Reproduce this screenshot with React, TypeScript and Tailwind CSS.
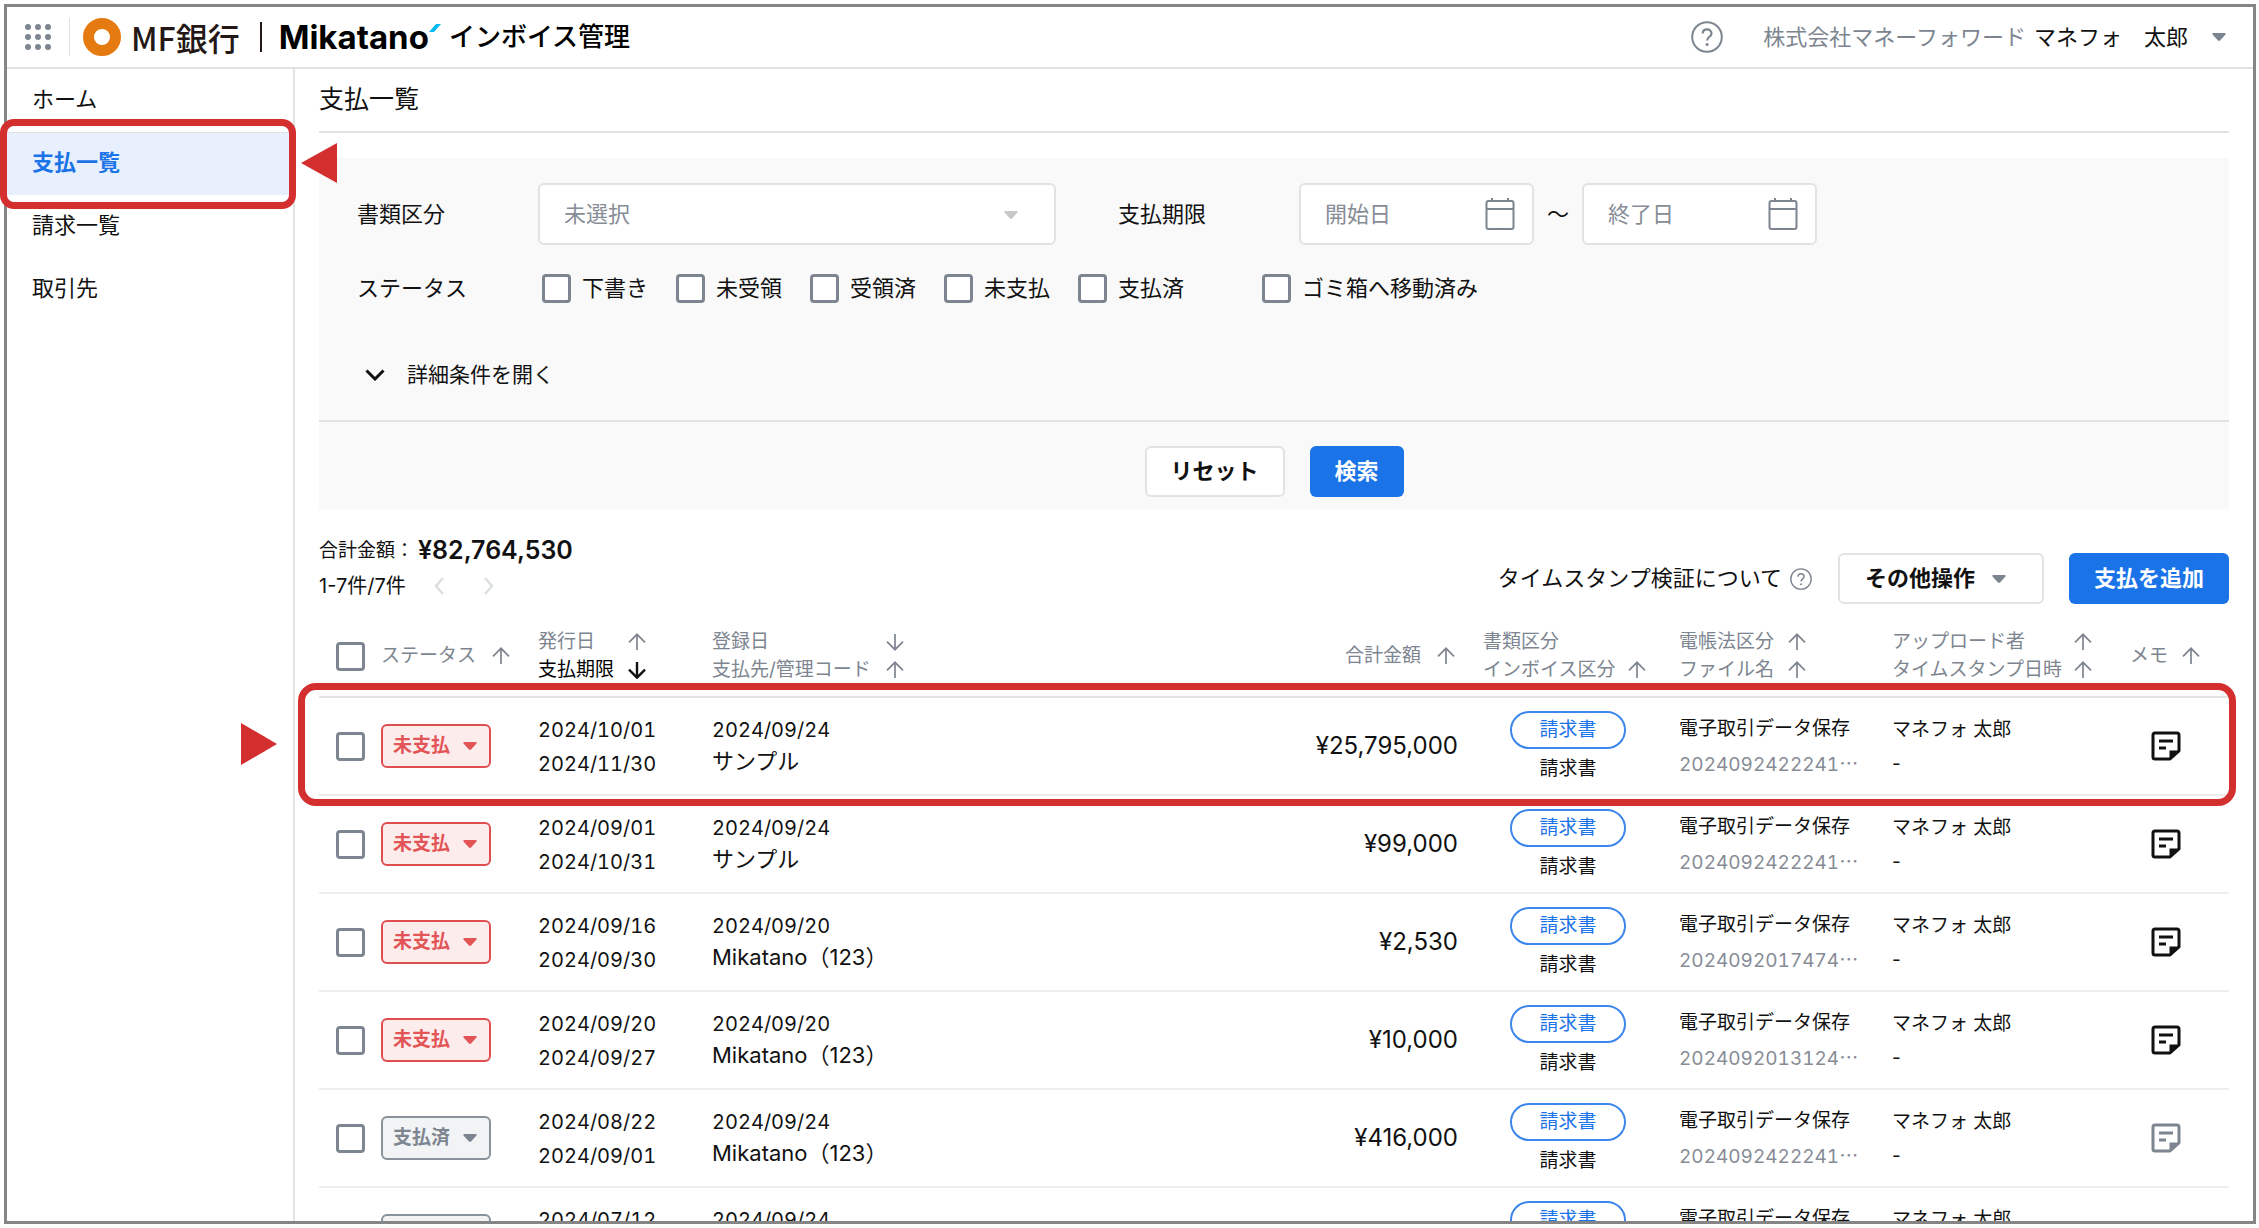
import type { ReactNode } from "react";

type Payment = {
  status: "未支払" | "支払済";
  issued: string;
  due: string;
  registered: string;
  payee: string;
  amount: string;
  file: string;
  memo: boolean;
};

const payments: Payment[] = [
  { status: "未支払", issued: "2024/10/01", due: "2024/11/30", registered: "2024/09/24", payee: "サンプル", amount: "¥25,795,000", file: "2024092422241", memo: true },
  { status: "未支払", issued: "2024/09/01", due: "2024/10/31", registered: "2024/09/24", payee: "サンプル", amount: "¥99,000", file: "2024092422241", memo: true },
  { status: "未支払", issued: "2024/09/16", due: "2024/09/30", registered: "2024/09/20", payee: "Mikatano（123）", amount: "¥2,530", file: "2024092017474", memo: true },
  { status: "未支払", issued: "2024/09/20", due: "2024/09/27", registered: "2024/09/20", payee: "Mikatano（123）", amount: "¥10,000", file: "2024092013124", memo: true },
  { status: "支払済", issued: "2024/08/22", due: "2024/09/01", registered: "2024/09/24", payee: "Mikatano（123）", amount: "¥416,000", file: "2024092422241", memo: false },
  { status: "支払済", issued: "2024/07/12", due: "2024/08/01", registered: "2024/09/24", payee: "サンプル", amount: "¥416,000", file: "2024092422241", memo: false },
];

const navItems = ["ホーム", "支払一覧", "請求一覧", "取引先"];
const statuses = ["下書き", "未受領", "受領済", "未支払", "支払済"];

function Caret({ className = "" }: { className?: string }) {
  return (
    <svg viewBox="0 0 14 8" className={`h-2 w-3.5 shrink-0 ${className}`} fill="currentColor" aria-hidden="true">
      <path d="M1.2 0h11.6c.8 0 1.2.8.7 1.4L8 7.5c-.5.6-1.5.6-2 0L.5 1.4C0 .8.4 0 1.2 0z" />
    </svg>
  );
}

function HelpIcon({ className }: { className: string }) {
  return (
    <svg viewBox="0 0 32 32" className={`shrink-0 text-[#7d8590] ${className}`} fill="none" stroke="currentColor" strokeWidth="2" aria-hidden="true">
      <circle cx="16" cy="16" r="14.8" />
      <path d="M11.7 12.6c0-2.6 1.9-4.2 4.4-4.2s4.4 1.6 4.4 4c0 3.300-4.400 3.500-4.400 7.200" strokeWidth="2.2" />
      <circle cx="16.1" cy="23.6" r="1.5" fill="currentColor" stroke="none" />
    </svg>
  );
}

function Arrow({ down = false, active = false }: { down?: boolean; active?: boolean }) {
  return (
    <svg viewBox="0 0 18 18" className={`h-[18px] w-[18px] shrink-0 ${active ? "text-[#111]" : "text-[#7d8590]"}`} fill="none" stroke="currentColor" strokeWidth={active ? 2.4 : 1.7} aria-hidden="true">
      <path d={down ? "M9 1v15.5M1 8.7l8 8 8-8" : "M9 17V1.5M1 9.3l8-8 8 8"} />
    </svg>
  );
}

function SortLabel({ label, down, active, sortable = true, className = "" }: { label: string; down?: boolean; active?: boolean; sortable?: boolean; className?: string }) {
  return (
    <button type="button" className={`flex h-7 items-center whitespace-nowrap ${active ? "text-black" : ""} ${className}`}>
      {label}
      {sortable && <Arrow down={down} active={active} />}
    </button>
  );
}

function Checkbox({ id, label }: { id?: string; label?: string }) {
  return (
    <input id={id} type="checkbox" aria-label={label} className="block h-[29px] w-[29px] shrink-0 appearance-none rounded-[4px] border-[3px] border-[#7d8590] bg-white" />
  );
}

function LabeledCheckbox({ label }: { label: string }) {
  return (
    <div className="flex items-center gap-[11px]">
      <Checkbox id={`status-${label}`} />
      <label htmlFor={`status-${label}`} className="whitespace-nowrap">{label}</label>
    </div>
  );
}

function DateField({ label }: { label: string }) {
  return (
    <div className="flex h-[62px] w-[235px] items-center rounded-md border-2 border-[#dfe3e3] bg-white pr-[17px] pl-6">
      <input type="text" aria-label={label} placeholder={label} className="w-full min-w-0 bg-transparent outline-none placeholder:text-[#878c96]" />
      <svg viewBox="0 0 30 32" className="h-8 w-[30px] shrink-0 text-[#7d8590]" fill="none" stroke="currentColor" strokeWidth="2" aria-hidden="true">
        <rect x="1.5" y="3" width="27" height="28" rx="2" />
        <path d="M1.5 11h27M7 0v4M23 0v4" />
      </svg>
    </div>
  );
}

function MemoIcon({ filled }: { filled: boolean }) {
  return (
    <svg viewBox="0 0 30 30" className={`h-[30px] w-[30px] ${filled ? "text-[#111]" : "text-[#7d8590]"}`} fill="none" stroke="currentColor" strokeWidth="3" aria-hidden="true">
      <path d="M19 28H4a2 2 0 0 1-2-2V4a2 2 0 0 1 2-2h22a2 2 0 0 1 2 2v16z" strokeLinejoin="round" />
      <path d="M18.5 29v-9.5H29z" fill="currentColor" stroke="none" />
      <path d="M8 10h14M8 17h7" strokeWidth="2.8" />
    </svg>
  );
}

function Header() {
  return (
    <header className="flex h-[62px] shrink-0 items-center border-b-2 border-[#dfe3e3] pr-[27px] pl-[17px]">
      <button type="button" aria-label="メニュー" className="grid grid-cols-3 gap-1 p-px">
        {Array.from({ length: 9 }, (_, i) => (
          <span key={i} className="h-1.5 w-1.5 rounded-full bg-[#7d8590]" />
        ))}
      </button>
      <span className="ml-[17px] h-[38px] w-px bg-[#dfe3e3]" />
      <span className="ml-[13px] h-[38px] w-[38px] rounded-full border-[11px] border-[#e57b10]" />
      <span className="ml-[10px] font-['Noto_Sans_CJK_JP',sans-serif] text-[32px] leading-none font-medium text-[#231815]">MF銀行</span>
      <span className="ml-5 h-[30px] w-0.5 bg-[#231815]" />
      <h1 className="ml-[17px] flex items-center text-[26px] leading-none font-medium text-black">
        <span className="text-[33px] leading-none font-bold">Mikatano</span>
        <svg viewBox="0 0 12 8" className="mb-[18px] h-2 w-3" aria-hidden="true">
          <path d="M7 0h5L5 8H0z" fill="#00b9f2" />
        </svg>
        <span className="ml-2">インボイス管理</span>
      </h1>
      <div className="ml-auto flex items-center">
        <button type="button" aria-label="ヘルプ">
          <HelpIcon className="h-8 w-8" />
        </button>
        <button type="button" className="ml-10 flex items-center gap-2">
          <span className="text-[#7d8590]">株式会社マネーフォワード</span>
          <span>マネフォ　太郎</span>
          <Caret className="ml-4 text-[#7d8590]" />
        </button>
      </div>
    </header>
  );
}

function Sidebar() {
  return (
    <nav className="w-[288px] shrink-0 border-r-2 border-[#dfe3e3]">
      {navItems.map((item) =>
        item === "支払一覧" ? (
          <div key={item} className="relative">
            <a href="#" className="flex h-[63px] items-center border-t border-[#dfe3e3] bg-[#e8f0fe] pb-[3px] pl-[25px] font-bold text-[#1b73e8]">{item}</a>
            <span className="pointer-events-none absolute -top-[13px] -right-[3px] -bottom-[14px] -left-[7px] rounded-[14px] border-[7px] border-[#d32f2f]" />
            <svg viewBox="0 0 36 40" className="absolute top-[11px] left-[294px] z-10 h-10 w-9" aria-hidden="true">
              <path d="M36 0v40L0 20z" fill="#d32f2f" />
            </svg>
          </div>
        ) : (
          <a key={item} href="#" className="flex h-[63px] items-center pb-[3px] pl-[25px]">{item}</a>
        ),
      )}
    </nav>
  );
}

function Filters() {
  return (
    <form className="mt-[25px] bg-[#f9f9f9]">
      <div className="pt-[25px] pr-6 pb-[30px] pl-[38px]">
        <div className="flex items-center">
          <label htmlFor="doc-type" className="w-[181px] shrink-0">書類区分</label>
          <div className="relative w-[518px]">
            <select id="doc-type" className="h-[62px] w-full appearance-none rounded-md border-2 border-[#dfe3e3] bg-white pl-6 text-[#878c96]">
              <option>未選択</option>
            </select>
            <Caret className="absolute top-[28px] right-[38px] text-[#c8c8c8]" />
          </div>
          <span className="ml-[62px] w-[181px] shrink-0">支払期限</span>
          <DateField label="開始日" />
          <span className="w-12 text-center">～</span>
          <DateField label="終了日" />
        </div>
        <div className="mt-[29px] flex h-[29px] items-center">
          <span className="w-[185px] shrink-0">ステータス</span>
          <div className="flex gap-7">
            {statuses.map((s) => (
              <LabeledCheckbox key={s} label={s} />
            ))}
          </div>
          <div className="ml-[78px]">
            <LabeledCheckbox label="ゴミ箱へ移動済み" />
          </div>
        </div>
        <button type="button" className="mt-[57px] ml-2 flex h-[30px] items-center gap-[22px] text-[21px]">
          <svg viewBox="0 0 20 12" className="h-3 w-5" fill="none" stroke="currentColor" strokeWidth="3" aria-hidden="true">
            <path d="M1.5 1.5l8.5 8.5 8.5-8.5" />
          </svg>
          詳細条件を開く
        </button>
      </div>
      <div className="flex justify-center gap-[25px] border-t-2 border-[#dfe3e3] pt-6 pb-3 font-bold">
        <button type="reset" className="h-[51px] w-[140px] rounded-md border-2 border-[#dfe3e3] bg-white">リセット</button>
        <button type="button" className="h-[51px] w-[94px] rounded-md bg-[#1b73e8] text-white">検索</button>
      </div>
    </form>
  );
}

function Pager({ label, d }: { label: string; d: string }) {
  return (
    <button type="button" aria-label={label}>
      <svg viewBox="0 0 10 18" className="h-[18px] w-[10px] text-[#dbdfdf]" fill="none" stroke="currentColor" strokeWidth="2.4" aria-hidden="true">
        <path d={d} />
      </svg>
    </button>
  );
}

function Toolbar() {
  return (
    <div className="mt-[25px] flex items-end justify-between">
      <div className="text-[19px]">
        <p className="flex h-[34px] items-center">
          合計金額：<span className="ml-1 text-[25px] font-semibold">¥82,764,530</span>
        </p>
        <div className="flex h-9 items-center">
          <span className="text-xl">1-7件/7件</span>
          <span className="ml-[28px] flex gap-10">
            <Pager label="前へ" d="M9 1L2 9l7 8" />
            <Pager label="次へ" d="M1 1l7 8-7 8" />
          </span>
        </div>
      </div>
      <div className="flex h-[51px] items-center">
        <span>タイムスタンプ検証について</span>
        <HelpIcon className="ml-2 h-[22px] w-[22px]" />
        <button type="button" className="ml-[26px] flex h-full w-[206px] items-center justify-between rounded-md border-2 border-[#dfe3e3] bg-white pr-9 pl-[25px] font-bold">
          その他操作
          <Caret className="text-[#7d8590]" />
        </button>
        <button type="button" className="ml-[25px] h-full w-[160px] rounded-md bg-[#1b73e8] font-bold text-white">支払を追加</button>
      </div>
    </div>
  );
}

function Cell({ children, className = "" }: { children: ReactNode; className?: string }) {
  return <td className={`border-b-2 border-[#ededed] p-0 align-middle ${className}`}>{children}</td>;
}

function PaymentRow({ p, highlighted }: { p: Payment; highlighted: boolean }) {
  const unpaid = p.status === "未支払";
  return (
    <tr className="relative h-[98px]">
      <Cell className="pl-[17px]">
        <Checkbox label={`${p.issued} ${p.payee}`} />
        {highlighted && (
          <>
            <span className="pointer-events-none absolute -top-[15px] -right-[7px] -bottom-[10px] -left-[21px] rounded-[18px] border-[7px] border-[#d32f2f]" />
            <svg viewBox="0 0 36 42" className="absolute top-[25px] -left-[78px] h-[42px] w-9" aria-hidden="true">
              <path d="M0 0v42l36-21z" fill="#d32f2f" />
            </svg>
          </>
        )}
      </Cell>
      <Cell>
        <button
          type="button"
          className={`flex h-11 w-[110px] items-center justify-between rounded-md border-2 pr-3 pl-[10px] text-[19px] font-bold ${
            unpaid ? "border-[#e04f50] bg-[#fdecec] text-[#e25455]" : "border-[#8a929c] bg-[#f1f3f4] text-[#7d8590]"
          }`}
        >
          {p.status}
          <Caret />
        </button>
      </Cell>
      <Cell className="pt-0.5 text-xl leading-[34px] tabular-nums">
        {p.issued}
        <br />
        {p.due}
      </Cell>
      <Cell className="text-xl leading-[31px]">
        <span className="tabular-nums">{p.registered}</span>
        <br />
        <span className="text-[22px] leading-[31px]">{p.payee}</span>
      </Cell>
      <Cell className="pr-[25px] text-right text-2xl">{p.amount}</Cell>
      <Cell className="pt-0.5 pl-[27px] leading-7">
        <div className="flex w-[116px] flex-col items-center gap-1.5">
          <span className="flex h-[38px] w-full items-center justify-center rounded-full border-2 border-[#3d86ec] text-[#1b73e8]">請求書</span>
          <span>請求書</span>
        </div>
      </Cell>
      <Cell className="pt-0.5 leading-[34px]">
        電子取引データ保存
        <br />
        <a href="#" className="text-[#878c96] tabular-nums">
          {p.file}
          <span className="font-['Noto_Sans_CJK_JP',sans-serif]">…</span>
        </a>
      </Cell>
      <Cell className="pt-0.5 leading-[34px]">
        マネフォ 太郎
        <br />-
      </Cell>
      <Cell className="pl-[21px]">
        <button type="button" aria-label="メモ" className="block">
          <MemoIcon filled={p.memo} />
        </button>
      </Cell>
    </tr>
  );
}

function PaymentTable() {
  const th = "border-b-2 border-[#dfe3e3] p-0 pb-3 text-left align-middle font-normal";
  return (
    <table className="mt-6 w-full table-fixed border-separate border-spacing-0 text-[19px]">
      <colgroup>
        <col className="w-[62px]" />
        <col className="w-[157px]" />
        <col className="w-[174px]" />
        <col />
        <col className="w-[300px]" />
        <col className="w-[196px]" />
        <col className="w-[213px]" />
        <col className="w-[238px]" />
        <col className="w-[99px]" />
      </colgroup>
      <thead className="text-[#7d8590]">
        <tr>
          <th className={`${th} pl-[17px]`}><Checkbox label="すべて選択" /></th>
          <th className={th}><SortLabel label="ステータス" className="gap-4" /></th>
          <th className={th}>
            <SortLabel label="発行日" className="w-[108px] justify-between" />
            <SortLabel label="支払期限" down active className="w-[108px] justify-between" />
          </th>
          <th className={th}>
            <SortLabel label="登録日" down className="w-[192px] justify-between" />
            <SortLabel label="支払先/管理コード" className="w-[192px] justify-between" />
          </th>
          <th className={`${th} pr-[28px]`}><SortLabel label="合計金額" className="ml-auto gap-4" /></th>
          <th className={th}>
            <SortLabel label="書類区分" sortable={false} />
            <SortLabel label="インボイス区分" className="w-[163px] justify-between" />
          </th>
          <th className={th}>
            <SortLabel label="電帳法区分" className="w-[127px] justify-between" />
            <SortLabel label="ファイル名" className="w-[127px] justify-between" />
          </th>
          <th className={th}>
            <SortLabel label="アップロード者" className="w-[200px] justify-between" />
            <SortLabel label="タイムスタンプ日時" className="w-[200px] justify-between" />
          </th>
          <th className={th}><SortLabel label="メモ" className="gap-3.5" /></th>
        </tr>
      </thead>
      <tbody>
        {payments.map((p, i) => (
          <PaymentRow key={i} p={p} highlighted={i === 0} />
        ))}
      </tbody>
    </table>
  );
}

export default function App() {
  return (
    <div className="h-screen overflow-hidden bg-white py-1 pr-[3px] pl-1 font-['Inter','Noto_Sans_CJK_JP',sans-serif] text-[22px] text-[#111]">
      <div className="flex h-full flex-col border-[3px] border-[#858585]">
        <Header />
        <div className="flex min-h-0 grow overflow-y-clip">
          <Sidebar />
          <main className="min-w-0 grow px-6">
            <h2 className="flex h-16 items-center border-b-2 border-[#dfe3e3] text-[25px]">支払一覧</h2>
            <Filters />
            <Toolbar />
            <PaymentTable />
          </main>
        </div>
      </div>
    </div>
  );
}
